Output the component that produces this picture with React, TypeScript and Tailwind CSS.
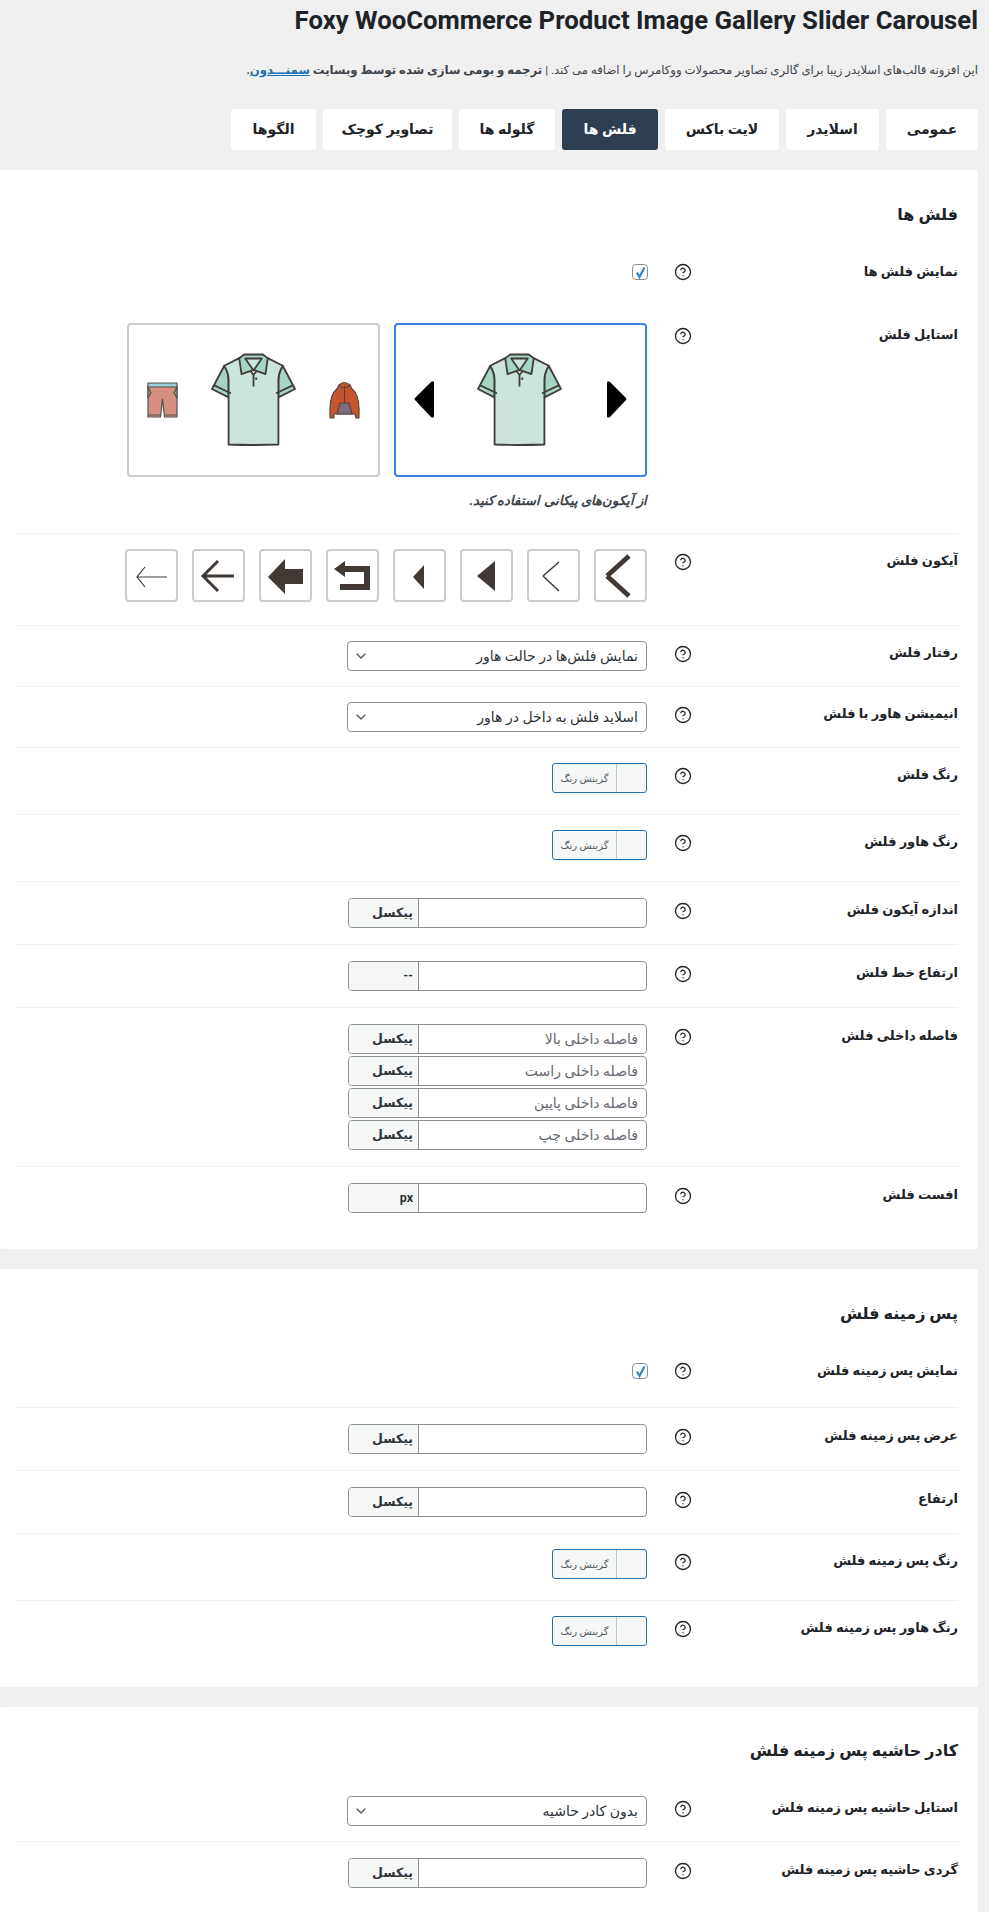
import React from 'react';
import { ChevronDown, CircleHelp } from 'lucide-react';

const tabs = ['عمومی', 'اسلایدر', 'لایت باکس', 'فلش ها', 'گلوله ها', 'تصاویر کوچک', 'الگوها'];
const tabWidths = ['w-[92px]', 'w-[93px]', 'w-[114px]', 'w-[96px]', 'w-[96px]', 'w-[129px]', 'w-[85px]'];

const Shirt = ({ x, y }: { x: number; y: number }) => (
  <svg x={x} y={y} width="87" height="96" viewBox="262 98 262 286">
    <g stroke="#423d3a" strokeWidth="5.5" strokeLinejoin="round" strokeLinecap="round">
      <path d="M305 138L268 208L318 233V180Q318 160 305 138Z" fill="#a6d5c4" />
      <path d="M481 138L518 208L468 233V180Q468 160 481 138Z" fill="#a6d5c4" />
      <path d="M350 115L305 138Q318 160 318 180V375Q393 378 468 375V180Q468 160 481 138L436 115L393 165Z" fill="#cbe5dc" />
      <path d="M365 104H421L436 115L429 163L393 150L357 163L350 115Z" fill="#a6d5c4" />
      <path d="M368 116H418L393 152Z" fill="#cbe5dc" />
      <path d="M393 165V198M275 197L323 220M511 197L463 220" fill="none" />
    </g>
    <circle cx="401" cy="177" r="3.5" fill="#423d3a" />
  </svg>
);

const Shorts = () => (
  <g stroke="#55504c" strokeWidth="1.2" strokeLinejoin="round">
    <path d="M21 63H50V94H37.500L35.500 76L33.500 94H21Z" fill="#d68f80" />
    <path d="M21 60H50V64H21Z" fill="#9ccfd8" />
    <path d="M21 64V75L24 70ZM50 64V75L47 70Z" fill="#a89c8c" />
    <path d="M21 92H33.500M37.500 92H50" fill="none" />
  </g>
);

const Jacket = () => (
  <g stroke="#55423a" strokeWidth="1.1" strokeLinejoin="round">
    <path d="M212 62Q217 57 223 62Q224 66 228 69Q233 76 232 95H229L228 91H207V95H203Q202 76 207 69Q211 66 212 62Z" fill="#c4552d" />
    <path d="M210 91L213 80H222L225 91Z" fill="#7d6b7a" />
    <path d="M217.500 63V80M212 62Q217 68 223 62" fill="none" />
  </g>
);

const ArrowStylePic = () => (
  <svg width="249" height="150" viewBox="2 2 249 150">
    <Shirt x={82} y={29} />
    <path d="M40 60V93Q40 96 37 94L21 77Q20 76 21 75L37 59Q40 57 40 60Z" fill="#000" />
    <path d="M213 60V93Q213 96 216 94L232 77Q233 76 232 75L216 59Q213 57 213 60Z" fill="#000" />
  </svg>
);

const ThumbStylePic = () => (
  <svg width="249" height="150" viewBox="2 2 249 150">
    <Shorts />
    <Shirt x={83} y={29} />
    <Jacket />
  </svg>
);

const icons: React.ReactNode[] = [
  <path d="M13 27L35 7M13 27L35 47" fill="none" stroke="#423834" strokeWidth="5" />,
  <path d="M16 27L32 13M16 27L32 42" fill="none" stroke="#423834" strokeWidth="1.5" />,
  <path d="M17 27L35 12V42Z" fill="#423834" />,
  <path d="M20 28L31 16V40Z" fill="#423834" />,
  <path d="M8 20L19 12V17H44V41H14V35H38V23H19V28Z" fill="#423834" />,
  <path d="M9 28L26 10V20H44V35H26V45Z" fill="#423834" />,
  <path d="M42 27H11M26 12L11 27L26 42" fill="none" stroke="#423834" strokeWidth="3" />,
  <path d="M42 28H12M20 18L12 28L20 38" fill="none" stroke="#423834" strokeWidth="1.2" />,
];

const Help = ({ flush }: { flush?: boolean }) => (
  <div className={flush ? 'w-4 h-4 shrink-0' : 'w-4 h-4 shrink-0 mt-[5px]'}>
    <CircleHelp size={18} strokeWidth={1.7} className="-m-px text-[#1d2327]" />
  </div>
);

const Row = ({
  label,
  children,
  flush,
  last,
  bare,
  className,
}: {
  label: string;
  children: React.ReactNode;
  flush?: boolean;
  last?: boolean;
  bare?: boolean;
  className?: string;
}) => (
  <div className={`flex items-start ${last || bare ? '' : 'border-b border-[#f0f0f1]'} ${className}`}>
    <div className={`w-[267px] shrink-0 text-[13px] font-bold leading-5 text-[#1d2327] ${flush ? 'mt-[-2px]' : 'mt-[2px]'}`}>{label}</div>
    <Help flush={flush} />
    <div className="mr-7 flex-1 flex flex-col items-start">{children}</div>
  </div>
);

const Check = () => (
  <div className="w-4 h-4 -mr-px rounded-[4px] border border-[#8c8f94] bg-white flex items-center justify-center">
    <svg width="13" height="13" viewBox="0 0 13 13">
      <path d="M3 6.500L5.500 11L10.500 1.500" fill="none" stroke="#3582c4" strokeWidth="2.200" />
    </svg>
  </div>
);

const Select = ({ value }: { value: string }) => (
  <div className="w-[300px] h-[30px] rounded-[4px] border border-[#8c8f94] bg-white flex items-center justify-between pr-2 pl-[5px] text-[14px] text-[#2c3338]">
    <span>{value}</span>
    <ChevronDown size={16} className="text-[#50575e]" />
  </div>
);

const UnitInput = ({ unit, placeholder }: { unit: string; placeholder?: string }) => (
  <div className="w-[299px] h-[30px] rounded-[4px] border border-[#8c8f94] bg-white flex items-stretch">
    <div className="flex-1 pr-2 flex items-center text-[14px] text-[#646970]">{placeholder}</div>
    <div className="w-[70px] border-r border-[#8c8f94] bg-[#f6f7f7] rounded-l-[3px] pr-[5px] flex items-center text-[12.500px] font-bold text-[#2c3338]">{unit}</div>
  </div>
);

const ColorPick = () => (
  <div className="w-[95px] h-[30px] rounded-[3px] border border-[#2271b1] bg-[#f6f7f7] flex items-stretch">
    <div className="w-[30px] border-l border-[#c3c4c7]" />
    <div className="flex-1 flex items-center justify-center text-[10px] text-[#50575e] whitespace-nowrap">گزینش رنگ</div>
  </div>
);

const Heading = ({ children, className }: { children: React.ReactNode; className: string }) => (
  <h2 className={`text-[16px] leading-6 font-bold text-[#1d2327] ${className}`}>{children}</h2>
);

const Card = ({ children }: { children: React.ReactNode }) => (
  <section className="bg-white rounded-[3px] pr-5 pl-4 mb-5">{children}</section>
);

export default function App() {
  return (
    <div dir="rtl" className="min-h-[1912px] bg-[#f0f0f1] pr-[11px] font-['Roboto','DejaVu_Sans',sans-serif] overflow-hidden">
      <div className="h-[170px]">
        <h1 dir="ltr" className="text-right text-[25.700px] leading-10 font-bold text-[#1d2327] whitespace-nowrap">
          Foxy WooCommerce Product Image Gallery Slider Carousel
        </h1>
        <p className="mt-5 text-[11.700px] leading-5 text-[#3c434a] whitespace-nowrap">
          این افزونه قالب‌های اسلایدر زیبا برای گالری تصاویر محصولات ووکامرس را اضافه می کند. |{' '}
          <strong>
            ترجمه و بومی سازی شده توسط وبسایت <a className="text-[#2271b1] underline">سمنـــدون</a>.
          </strong>
        </p>
        <nav className="mt-[29px] flex gap-[7px]">
          {tabs.map((t, i) => (
            <div
              key={t}
              className={`${tabWidths[i]} h-[41px] rounded-[3px] flex items-center justify-center text-[14px] font-bold ${
                i === 3 ? 'bg-[#2c3e50] text-white' : 'bg-white text-[#1d2327]'
              }`}
            >
              {t}
            </div>
          ))}
        </nav>
      </div>

      <Card>
        <Heading className="pt-[33px] pb-[21px]">فلش ها</Heading>
        <Row label="نمایش فلش ها" flush bare className="pt-4 pb-7 h-[60px]">
          <Check />
        </Row>
        <Row label="استایل فلش" className="pt-[15px] pb-[22px]">
          <div className="flex gap-[14px]">
            <div className="w-[253px] h-[154px] rounded-[4px] border-2 border-[#3582e2]">
              <ArrowStylePic />
            </div>
            <div className="w-[253px] h-[154px] rounded-[4px] border-2 border-[#cccccc]">
              <ThumbStylePic />
            </div>
          </div>
          <p className="mt-[14px] text-[13px] leading-5 italic font-bold text-[#3c434a]">از آیکون‌های پیکانی استفاده کنید.</p>
        </Row>
        <Row label="آیکون فلش" className="pt-[15px] pb-[23px]">
          <div className="flex gap-[14px]">
            {icons.map((ic, i) => (
              <div key={i} className="w-[53px] h-[53px] rounded-[4px] border-2 border-[#cccccc]">
                <svg width="49" height="49" viewBox="2 2 49 49">
                  {ic}
                </svg>
              </div>
            ))}
          </div>
        </Row>
        <Row label="رفتار فلش" className="py-[15px]">
          <Select value="نمایش فلش‌ها در حالت هاور" />
        </Row>
        <Row label="انیمیشن هاور با فلش" className="py-[15px]">
          <Select value="اسلاید فلش به داخل در هاور" />
        </Row>
        <Row label="رنگ فلش" className="pt-[15px] pb-[21px]">
          <ColorPick />
        </Row>
        <Row label="رنگ هاور فلش" className="pt-[15px] pb-[21px]">
          <ColorPick />
        </Row>
        <Row label="اندازه آیکون فلش" className="py-4">
          <UnitInput unit="پیکسل" />
        </Row>
        <Row label="ارتفاع خط فلش" className="py-4">
          <UnitInput unit="--" />
        </Row>
        <Row label="فاصله داخلی فلش" className="py-4">
          <div className="flex flex-col gap-[2px]">
            <UnitInput unit="پیکسل" placeholder="فاصله داخلی بالا" />
            <UnitInput unit="پیکسل" placeholder="فاصله داخلی راست" />
            <UnitInput unit="پیکسل" placeholder="فاصله داخلی پایین" />
            <UnitInput unit="پیکسل" placeholder="فاصله داخلی چپ" />
          </div>
        </Row>
        <Row label="افست فلش" last className="pt-4 pb-9">
          <UnitInput unit="px" />
        </Row>
      </Card>

      <Card>
        <Heading className="pt-[33px] pb-[21px]">پس زمینه فلش</Heading>
        <Row label="نمایش پس زمینه فلش" flush className="pt-4 pb-7 h-[61px]">
          <Check />
        </Row>
        <Row label="عرض پس زمینه فلش" className="py-4">
          <UnitInput unit="پیکسل" />
        </Row>
        <Row label="ارتفاع" className="py-4">
          <UnitInput unit="پیکسل" />
        </Row>
        <Row label="رنگ پس زمینه فلش" className="pt-[15px] pb-[21px]">
          <ColorPick />
        </Row>
        <Row label="رنگ هاور پس زمینه فلش" last className="pt-[15px] pb-[41px]">
          <ColorPick />
        </Row>
      </Card>

      <Card>
        <Heading className="pt-[32px] pb-[18px]">کادر حاشیه پس زمینه فلش</Heading>
        <Row label="استایل حاشیه پس زمینه فلش" className="py-[15px]">
          <Select value="بدون کادر حاشیه" />
        </Row>
        <Row label="گردی حاشیه پس زمینه فلش" last className="pt-4 pb-9">
          <UnitInput unit="پیکسل" />
        </Row>
      </Card>
    </div>
  );
}
